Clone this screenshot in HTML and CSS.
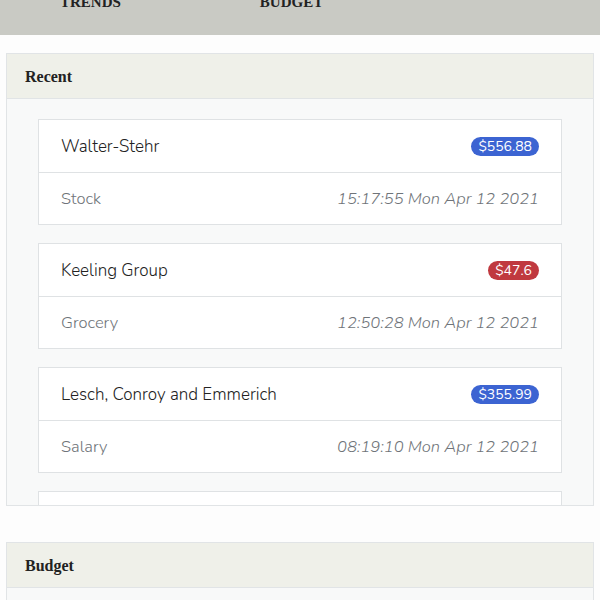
FILE: index.html
```html
<!DOCTYPE html>
<html lang="en">
<head>
<meta charset="utf-8">
<title>Budget</title>
<link rel="stylesheet" href="styles.css">
</head>
<body>
<nav class="topnav">
  <a class="nav-link" href="#">TRENDS</a>
  <a class="nav-link" href="#">BUDGET</a>
</nav>

<section class="card">
  <header class="card-header">Recent</header>
  <div class="card-body scroll">
    <div class="item">
      <div class="row">
        <span class="name">Walter-Stehr</span>
        <span class="badge blue">$556.88</span>
      </div>
      <div class="row sub">
        <span class="cat">Stock</span>
        <span class="date">15:17:55 Mon Apr 12 2021</span>
      </div>
    </div>
    <div class="item">
      <div class="row">
        <span class="name">Keeling Group</span>
        <span class="badge red">$47.6</span>
      </div>
      <div class="row sub">
        <span class="cat">Grocery</span>
        <span class="date">12:50:28 Mon Apr 12 2021</span>
      </div>
    </div>
    <div class="item">
      <div class="row">
        <span class="name">Lesch, Conroy and Emmerich</span>
        <span class="badge blue">$355.99</span>
      </div>
      <div class="row sub">
        <span class="cat">Salary</span>
        <span class="date">08:19:10 Mon Apr 12 2021</span>
      </div>
    </div>
    <div class="item">
      <div class="row">
        <span class="name">Kuhn LLC</span>
        <span class="badge red">$21.5</span>
      </div>
      <div class="row sub">
        <span class="cat">Grocery</span>
        <span class="date">06:02:41 Mon Apr 12 2021</span>
      </div>
    </div>
  </div>
</section>

<section class="card budget">
  <header class="card-header">Budget</header>
  <div class="card-body"></div>
</section>
</body>
</html>
```

FILE: styles.css
```css
html, body {
  margin: 0;
  padding: 0;
  background: #fdfdfd;
}

.topnav {
  margin-top: -7px;
  height: 42px;
  background: #c9cac4;
  display: flex;
  gap: 139px;
  padding-left: 60px;
  box-sizing: border-box;
}

.nav-link {
  font-family: "Liberation Serif", "Times New Roman", serif;
  font-weight: bold;
  font-size: 15px;
  line-height: 18px;
  color: #222;
  text-decoration: none;
}

.card {
  margin: 18px 6px 0;
  border: 1px solid #e1e4e6;
  background: #f8f9f9;
}

.card.budget {
  margin-top: 36px;
}

.card-header {
  height: 44px;
  line-height: 45px;
  padding: 0 18px;
  background: #eff0e9;
  border-bottom: 1px solid #e1e4e6;
  font-family: "Liberation Serif", "Times New Roman", serif;
  font-weight: bold;
  font-size: 16px;
  color: #222;
}

.card-body {
  padding: 20px 31px 0;
  min-height: 20px;
}

.card-body.scroll {
  height: 386px;
  overflow: hidden;
}

.item {
  background: #fff;
  border: 1px solid #dfe2e4;
  margin-bottom: 18px;
}

.row {
  display: flex;
  justify-content: space-between;
  align-items: center;
  padding: 12px 22px;
  height: 28px;
  font-family: "Nunito", "Lato", "Noto Sans", sans-serif;
  font-weight: 300;
  font-size: 17px;
  color: #222;
}

.row.sub {
  border-top: 1px solid #dfe2e4;
  height: 27px;
  font-size: 16.5px;
  color: #6f7479;
}

.date {
  font-style: italic;
}

.badge {
  display: inline-block;
  height: 19px;
  line-height: 19px;
  padding: 0 7px;
  border-radius: 10px;
  font-size: 14px;
  font-weight: 400;
  color: #fff;
}

.badge.blue {
  background: #3c64d2;
}

.badge.red {
  background: #c0393f;
}
```
